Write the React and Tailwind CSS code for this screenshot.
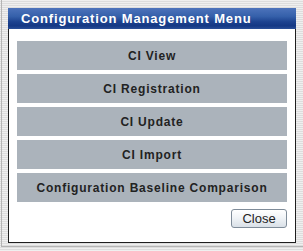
const items = [
  'CI View',
  'CI Registration',
  'CI Update',
  'CI Import',
  'Configuration Baseline Comparison',
];

export default function App() {
  return (
    <div className="w-[303px] h-[251px] overflow-hidden bg-[repeating-linear-gradient(to_bottom,#efefef_0px,#efefef_1px,#dddddd_1px,#dddddd_2px)] font-['Liberation_Sans',Arial,sans-serif]">
      <div className="ml-px h-[247px] w-[302px] border-l border-b border-[#b4b4b4] pl-[6px] pt-[8px]">
        {/* PANEL */}
        <div className="w-[288px]">
          <div className="h-[21px] flex items-center pl-[13px] bg-[linear-gradient(to_bottom,#4d73bb_0%,#3560aa_40%,#1d4390_65%,#143884_85%,#2a4f98_100%)]">
            <span className="text-white text-[13px] font-bold tracking-[0.85px] leading-none">
              Configuration Management Menu
            </span>
          </div>
          <div className="h-[214px] bg-white border-x border-b border-[#1e1e1e] px-[8px] pt-[12px]">
            <div className="flex flex-col gap-[4px]">
              {items.map((label) => (
                <button
                  key={label}
                  className="h-[29px] w-[270px] bg-[#abb3bb] text-[#222] text-[12px] font-bold tracking-[0.8px] flex items-center justify-center"
                >
                  {label}
                </button>
              ))}
            </div>
            <div className="flex justify-end mt-[7px]">
              <button className="h-[19px] w-[56px] rounded-[3px] border border-[#7f8c99] bg-[linear-gradient(to_bottom,#ffffff_0%,#f1f4f7_45%,#d9e0e7_100%)] text-[13px] text-[#222] leading-none">
                Close
              </button>
            </div>
          </div>
        </div>
      </div>
    </div>
  );
}
